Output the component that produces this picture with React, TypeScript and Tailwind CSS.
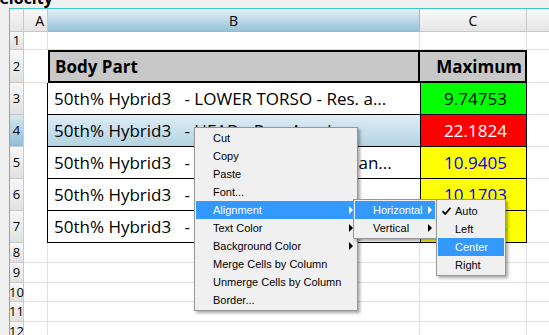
import React from 'react';

// grid colors
const GRID = 'border-[#e2e2e2]';

interface DataRow {
  n: number;
  text: string;
  value: string;
  cellBg: string;
  cellText: string;
  selected?: boolean;
}

const dataRows: DataRow[] = [
  { n: 3, text: '50th% Hybrid3   - LOWER TORSO - Res. a...', value: '9.74753', cellBg: 'bg-[#00ff00]', cellText: 'text-black' },
  { n: 4, text: '50th% Hybrid3   - HEAD - Res. Accel.', value: '22.1824', cellBg: 'bg-[#ff0000]', cellText: 'text-white', selected: true },
  { n: 5, text: '50th% Hybrid3   - UPPER TORSO - Res. an...', value: '10.9405', cellBg: 'bg-[#ffff00]', cellText: 'text-[#0000ff]' },
  { n: 6, text: '50th% Hybrid3   - PELVIS - Res.', value: '10.1703', cellBg: 'bg-[#ffff00]', cellText: 'text-[#0000ff]' },
  { n: 7, text: '50th% Hybrid3   - NECK - Res. Force', value: '10.5383', cellBg: 'bg-[#ffff00]', cellText: 'text-[#0000ff]' },
];

const RowHead = ({ n, h, active = false }: { n: number; h: string; active?: boolean }) => (
  <div
    className={`${h} w-[14px] shrink-0 flex items-center justify-center border-b border-r border-[#c9c9c9] text-[13px] text-black leading-none ${
      active ? 'bg-gradient-to-b from-[#d6e8f1] to-[#8fbdd7]' : 'bg-gradient-to-b from-[#f7f7f7] to-[#e1e1e1]'
    }`}
  >
    {n}
  </div>
);

const BlankRow = ({ n, h }: { n: number; h: string }) => (
  <div className="flex">
    <RowHead n={n} h={h} />
    <div className={`${h} w-[24px] shrink-0 border-r border-b ${GRID}`} />
    <div className={`${h} w-[372px] shrink-0 border-r border-b ${GRID}`} />
    <div className={`${h} w-[107px] shrink-0 border-r border-b ${GRID}`} />
    <div className={`${h} flex-1 border-b ${GRID}`} />
  </div>
);

const Arrow = ({ white = false }: { white?: boolean }) => (
  <span
    className={`w-0 h-0 border-y-[4px] border-y-transparent border-l-[4px] ${white ? 'border-l-white' : 'border-l-black'}`}
  />
);

const MenuItem = ({
  label,
  active = false,
  arrow = false,
  check = false,
  pl = 'pl-[17px]',
}: {
  label: string;
  active?: boolean;
  arrow?: boolean;
  check?: boolean;
  pl?: string;
}) => (
  <div
    className={`relative h-[18px] flex items-center justify-between ${pl} pr-[3px] whitespace-nowrap ${
      active ? 'bg-[#3399ff] text-white' : 'text-black'
    }`}
  >
    {check && (
      <svg className="absolute left-[4px] top-[5px]" width="9" height="8" viewBox="0 0 9 8">
        <path d="M0.5 4.2 L3.2 7 L8.5 0.8" fill="none" stroke="black" strokeWidth="1.8" />
      </svg>
    )}
    <span>{label}</span>
    {arrow && <Arrow white={active} />}
  </div>
);

export default function App() {
  return (
    <div className="relative w-[549px] h-[335px] overflow-hidden bg-[#f0f0f0] font-['Open_Sans',sans-serif]">
      {/* title above the grid, mostly cut off */}
      <div className="h-[8px] overflow-hidden">
        <div className="-mt-[11px] -ml-[11px] text-[16px] font-bold leading-[18px] text-black">Velocity</div>
      </div>

      <div className="ml-[9px] border-l border-t border-[#3ec6c9] bg-white">
        {/* column headers */}
        <div className="flex h-[23px] text-[14px] text-black">
          <div className="w-[14px] shrink-0 border-r border-b border-[#c9c9c9] bg-gradient-to-b from-[#f7f7f7] to-[#e4e4e4]" />
          <div className="w-[24px] shrink-0 flex items-center justify-end pr-[3px] border-r border-b border-[#c9c9c9] bg-gradient-to-b from-[#f9f9f9] to-[#e4e4e4]">
            A
          </div>
          <div className="w-[372px] shrink-0 flex items-center justify-center border-r border-b border-[#9ab9cc] bg-gradient-to-b from-[#e4f0f6] to-[#97c1d8]">
            B
          </div>
          <div className="w-[107px] shrink-0 flex items-center justify-center border-r border-b border-[#c9c9c9] bg-gradient-to-b from-[#f9f9f9] to-[#e4e4e4]">
            C
          </div>
          <div className="flex-1 border-b border-[#c9c9c9] bg-gradient-to-b from-[#f9f9f9] to-[#e4e4e4]" />
        </div>

        <BlankRow n={1} h="h-[18px]" />

        {/* table header row */}
        <div className="flex">
          <RowHead n={2} h="h-[33px]" />
          <div className={`h-[33px] w-[24px] shrink-0 border-b ${GRID}`} />
          <div className="h-[33px] w-[372px] shrink-0 flex items-center pl-[5px] border-2 border-black bg-[#c8c8c8] text-[17px] font-bold text-black">
            Body Part
          </div>
          <div className="h-[33px] w-[107px] shrink-0 flex items-center justify-end pr-[3px] border-y-2 border-r-2 border-black bg-[#c8c8c8] text-[17px] font-bold text-black">
            Maximum
          </div>
          <div className={`h-[33px] flex-1 border-b ${GRID}`} />
        </div>

        {dataRows.map((r) => (
          <div key={r.n} className="flex">
            <RowHead n={r.n} h="h-[32px]" active={r.selected} />
            <div className="h-[32px] w-[24px] shrink-0 border-r border-black" />
            <div
              className={`h-[32px] w-[372px] shrink-0 flex items-center pl-[6px] border-b border-black overflow-hidden whitespace-pre text-[17px] text-black ${
                r.selected ? 'bg-gradient-to-b from-[#deedf4] to-[#b3d3e2]' : 'bg-white'
              }`}
            >
              {r.text}
            </div>
            <div
              className={`h-[32px] w-[107px] shrink-0 flex items-center justify-center pl-[4px] border-l border-b border-r border-black text-[17px] ${r.cellBg} ${r.cellText}`}
            >
              {r.value}
            </div>
            <div className={`h-[32px] flex-1 border-b ${GRID}`} />
          </div>
        ))}

        <BlankRow n={8} h="h-[20px]" />
        <BlankRow n={9} h="h-[20px]" />
        <BlankRow n={10} h="h-[19px]" />
        <BlankRow n={11} h="h-[20px]" />
        <BlankRow n={12} h="h-[20px]" />
      </div>

      {/* context menu */}
      <div className="absolute left-[194px] top-[127px] w-[164px] border border-[#979797] bg-[#f0f0f0] p-[1px] shadow-[2px_2px_3px_rgba(0,0,0,0.35)] font-['Liberation_Sans',sans-serif] text-[11px]">
        <MenuItem label="Cut" />
        <MenuItem label="Copy" />
        <MenuItem label="Paste" />
        <MenuItem label="Font..." />
        <MenuItem label="Alignment" arrow active />
        <MenuItem label="Text Color" arrow />
        <MenuItem label="Background Color" arrow />
        <MenuItem label="Merge Cells by Column" />
        <MenuItem label="Unmerge Cells by Column" />
        <MenuItem label="Border..." />
      </div>

      {/* alignment submenu */}
      <div className="absolute left-[353px] top-[199px] w-[84px] border border-[#979797] bg-[#f0f0f0] p-[1px] shadow-[2px_2px_3px_rgba(0,0,0,0.35)] font-['Liberation_Sans',sans-serif] text-[11px]">
        <MenuItem label="Horizontal" arrow active pl="pl-[18px]" />
        <MenuItem label="Vertical" arrow pl="pl-[18px]" />
      </div>

      {/* horizontal submenu */}
      <div className="absolute left-[436px] top-[199px] w-[70px] border border-[#979797] bg-[#f0f0f0] pt-[2px] pb-[1px] px-[1px] shadow-[2px_2px_3px_rgba(0,0,0,0.35)] font-['Liberation_Sans',sans-serif] text-[11px]">
        <MenuItem label="Auto" check />
        <MenuItem label="Left" />
        <MenuItem label="Center" active />
        <MenuItem label="Right" />
      </div>
    </div>
  );
}
